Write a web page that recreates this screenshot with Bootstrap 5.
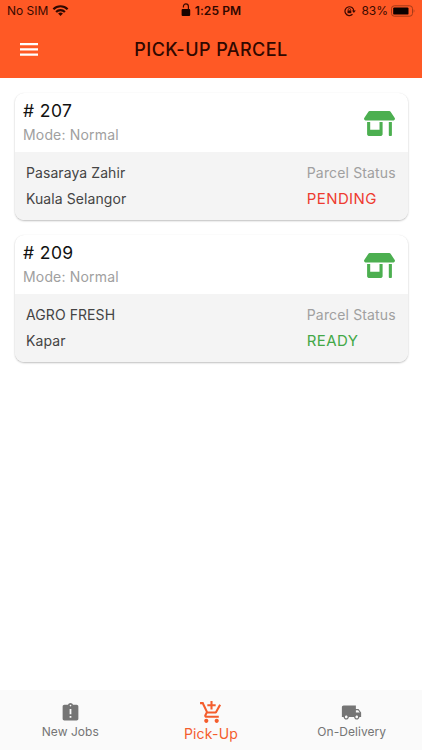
<!DOCTYPE html>
<html lang="en">
<head>
<meta charset="utf-8">
<meta name="viewport" content="width=device-width, initial-scale=1">
<title>Pick-Up Parcel</title>
<link href="https://cdn.jsdelivr.net/npm/bootstrap@5.3.0/dist/css/bootstrap.min.css" rel="stylesheet">
<style>
body{font-family:Inter,"Liberation Sans",sans-serif;background:#fff;height:750px;overflow:hidden;white-space:nowrap}
svg{display:block;flex:none}
.app-head{background:#ff5925;height:77.5px;color:#3a0a00}
.status{height:22px;font-size:12px;line-height:22px;padding:0 7px 0 7px;display:grid;grid-template-columns:1fr auto 1fr}
.clock{font-weight:600;letter-spacing:.1px;color:#300700}
.lock{margin-bottom:2px}
.batt{margin:0 3px 0 5px}
.title-row{height:55px;padding:0 38px 0 20px}
.title-row h1{font-size:18px;font-weight:500;letter-spacing:.45px;line-height:24px;color:#300800}
.parcels{padding:15px 14.5px 0 15px;gap:15.5px}
.parcel{border:0;border-radius:9px;overflow:hidden;height:127px;box-shadow:0 1px 2px rgba(0,0,0,.25),0 0 1px rgba(0,0,0,.06)}
.p-top{height:59px;padding:5px 13px 0 8px}
.p-num{font-size:17.5px;line-height:26px;letter-spacing:.4px;font-weight:400;color:#111}
.p-mode{font-size:14px;line-height:22px;letter-spacing:.17px;color:#a0a0a0}
.shop{margin-top:13px}
.p-body{background:#f4f4f4;padding:8px 11.7px 0 11px;font-size:14px;line-height:26px;letter-spacing:.08px;color:#444}
.p-label{color:#a0a0a0;letter-spacing:.15px}
.p-state{font-size:15px;font-weight:400;letter-spacing:.4px}
.pending{color:#ee3b30}
.ready{color:#43a847}
.tabs{background:#fafafa;height:59.5px;box-shadow:0 -1px 1px rgba(0,0,0,.02);color:#757575;font-size:12px;letter-spacing:.05px;line-height:16px}
.tab-cell{padding-bottom:10px}
.tab-on{color:#f45d2d;font-size:14px;letter-spacing:.2px;padding-bottom:8px}
.tab-gap{margin-bottom:1px}
</style>
</head>
<body class="d-flex flex-column">
<header class="app-head">
  <div class="status">
    <div class="d-flex align-items-center"><span class="sim">No SIM</span>
      <svg class="ms-1 lock" width="17" height="13" viewBox="0 0 17 13" fill="none" stroke="#300800" stroke-width="2.2"><path d="M1.4 5.2a10 10 0 0 1 14.2 0M4.1 8a6.2 6.2 0 0 1 8.8 0"/><path d="M8.5 12 6.1 9.6a3.4 3.4 0 0 1 4.8 0z" fill="#300800" stroke="none"/></svg></div>
    <div class="d-flex align-items-center clock"><svg class="me-1 lock" width="10" height="14" viewBox="0 0 10 14"><rect x=".6" y="6" width="8.6" height="7" rx="1" fill="#180300"/><path d="M2.4 4.4V3.4a2.5 2.5 0 0 1 5 0V6.4" fill="none" stroke="#3a0800" stroke-width="1.2"/></svg><span>1:25 PM</span></div>
    <div class="d-flex align-items-center justify-content-end">
      <svg width="12" height="12" viewBox="0 0 12 12" fill="none" stroke="#3a0800" stroke-width="1.2"><path d="M8.5 9.3A4.4 4.4 0 1 1 9.8 6"/><path d="M7.9 5.5h3.9L9.9 8z" fill="#3a0800" stroke="none"/><rect x="3.5" y="5.4" width="3.8" height="2.8" fill="#3a0800" stroke="none"/><path d="M4.2 5.4v-.7a1.200 1.200 0 0 1 2.400 0v.7" stroke-width=".8"/></svg>
      <span class="batt">83%</span>
      <svg width="24" height="12" viewBox="0 0 24 12"><rect x=".5" y=".8" width="21" height="10.4" rx="2.8" fill="none" stroke="#a53a18"/><rect x="2.2" y="2.4" width="15.3" height="7.2" rx="1.2" fill="#0a0100"/><path d="M22.7 4.3q1.5 1.7 0 3.4z" fill="#a53a18"/></svg>
    </div>
  </div>
  <div class="title-row d-flex align-items-center">
    <svg width="18" height="13" viewBox="0 0 18 13" fill="#fff"><path d="M0 0h18v2.200H0zM0 5.300h18v2.200H0zM0 10.600h18v2.200H0z"/></svg>
    <h1 class="mb-0 flex-grow-1 text-center">PICK-UP PARCEL</h1>
  </div>
</header>
<main class="parcels flex-grow-1 d-flex flex-column">
  <article class="card parcel">
    <div class="p-top d-flex justify-content-between">
      <div><div class="p-num"># 207</div><div class="p-mode">Mode: Normal</div></div>
      <svg class="shop" width="31" height="25" viewBox="0 0 640 512" fill="#4caf50"><path d="M320 384H128V224H64v256c0 17.700 14.300 32 32 32h256c17.700 0 32-14.300 32-32V224h-64v160zm314.600-241.800l-85.300-128c-6-8.900-16-14.200-26.700-14.200H117.400c-10.700 0-20.700 5.300-26.600 14.200l-85.300 128c-14.200 21.300 1 49.800 26.600 49.800H608c25.500 0 40.700-28.500 26.600-49.800zM512 496c0 8.800 7.200 16 16 16h32c8.800 0 16-7.200 16-16V224h-64v272z"/></svg>
    </div>
    <div class="p-body d-flex justify-content-between flex-grow-1">
      <div><div>Pasaraya Zahir</div><div>Kuala Selangor</div></div>
      <div><div class="p-label">Parcel Status</div><div class="p-state pending">PENDING</div></div>
    </div>
  </article>
  <article class="card parcel">
    <div class="p-top d-flex justify-content-between">
      <div><div class="p-num"># 209</div><div class="p-mode">Mode: Normal</div></div>
      <svg class="shop" width="31" height="25" viewBox="0 0 640 512" fill="#4caf50"><path d="M320 384H128V224H64v256c0 17.700 14.300 32 32 32h256c17.700 0 32-14.300 32-32V224h-64v160zm314.600-241.800l-85.300-128c-6-8.900-16-14.200-26.700-14.200H117.400c-10.700 0-20.700 5.300-26.600 14.200l-85.300 128c-14.200 21.300 1 49.800 26.600 49.800H608c25.500 0 40.700-28.500 26.600-49.800zM512 496c0 8.800 7.200 16 16 16h32c8.800 0 16-7.200 16-16V224h-64v272z"/></svg>
    </div>
    <div class="p-body d-flex justify-content-between flex-grow-1">
      <div><div>AGRO FRESH</div><div>Kapar</div></div>
      <div><div class="p-label">Parcel Status</div><div class="p-state ready">READY</div></div>
    </div>
  </article>
</main>
<nav class="tabs row g-0 text-center">
  <div class="col tab-cell d-flex flex-column align-items-center justify-content-end">
    <svg class="tab-gap" width="21" height="21" viewBox="0 0 24 24" fill="currentColor"><path d="M19 3h-4.180C14.400 1.840 13.300 1 12 1s-2.400.84-2.820 2H5c-1.100 0-2 .9-2 2v14c0 1.100.9 2 2 2h14c1.100 0 2-.9 2-2V5c0-1.100-.9-2-2-2zm-6 15h-2v-2h2v2zm0-4h-2V8h2v6zm-1-9c-.55 0-1-.45-1-1s.45-1 1-1 1 .45 1 1-.45 1-1 1z"/></svg>
    <div class="tab-name">New Jobs</div>
  </div>
  <div class="col tab-on d-flex flex-column align-items-center justify-content-end">
    <svg class="tab-gap" width="25" height="25" viewBox="0 0 24 24" fill="currentColor"><path d="M11 9h2V6h3V4h-3V1h-2v3H8v2h3v3zm-4 9c-1.100 0-1.990.9-1.990 2S5.900 22 7 22s2-.9 2-2-.9-2-2-2zm10 0c-1.100 0-1.990.9-1.990 2s.89 2 1.990 2 2-.9 2-2-.9-2-2-2zm-9.830-3.250l.03-.12.9-1.630h7.450c.75 0 1.410-.41 1.750-1.030l3.860-7.010L19.420 4h-.01l-1.100 2-2.760 5H8.530l-.13-.27L6.160 6l-.95-2-.94-2H1v2h2l3.600 7.590-1.350 2.450c-.16.28-.25.61-.25.96 0 1.100.9 2 2 2h12v-2H7.420c-.13 0-.25-.11-.25-.25z"/></svg>
    <div class="tab-name">Pick-Up</div>
  </div>
  <div class="col tab-cell d-flex flex-column align-items-center justify-content-end">
    <svg class="tab-gap" width="21" height="21" viewBox="0 0 24 24" fill="currentColor"><path d="M20 8h-3V4H3c-1.100 0-2 .9-2 2v11h2c0 1.660 1.340 3 3 3s3-1.340 3-3h6c0 1.660 1.340 3 3 3s3-1.340 3-3h2v-5l-3-4zM6 18.500c-.83 0-1.500-.67-1.500-1.500s.67-1.500 1.500-1.500 1.500.67 1.500 1.500-.67 1.500-1.500 1.500zm13.500-9l1.960 2.500H17V9.500h2.500zm-1.500 9c-.83 0-1.500-.67-1.500-1.500s.67-1.500 1.500-1.500 1.500.67 1.500 1.500-.67 1.500-1.500 1.500z"/></svg>
    <div class="tab-name">On-Delivery</div>
  </div>
</nav>
<script src="https://cdn.jsdelivr.net/npm/bootstrap@5.3.0/dist/js/bootstrap.bundle.min.js"></script>
</body>
</html>
